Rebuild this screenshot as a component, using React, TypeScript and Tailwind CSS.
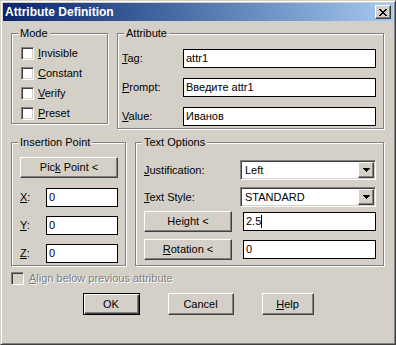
import type { ReactNode } from "react";

const raised =
  "border border-t-white border-l-white border-r-[#404040] border-b-[#404040] shadow-[inset_-1px_-1px_0_#808080]";
const sunken =
  "border border-t-[#808080] border-l-[#808080] border-r-white border-b-white shadow-[inset_1px_1px_0_#404040,inset_-1px_-1px_0_#d4d0c8]";

function Group({ label, className, children }: { label: string; className: string; children: ReactNode }) {
  return (
    <div className={`relative shrink-0 border border-[#808080] shadow-[inset_1px_1px_0_#fff,1px_1px_0_#fff] ${className}`}>
      <span className="absolute -top-[7px] left-[6px] bg-[#d4d0c8] px-[2px] leading-[13px] whitespace-nowrap">{label}</span>
      {children}
    </div>
  );
}

function Btn({ className = "", children }: { className?: string; children: ReactNode }) {
  return (
    <div className={`flex items-center justify-center shrink-0 ${raised} ${className}`}>
      <span className="whitespace-pre">{children}</span>
    </div>
  );
}

function Field({ className = "", children }: { className?: string; children?: ReactNode }) {
  return (
    <div className={`flex items-center shrink-0 bg-white border border-black pl-[2px] ${className}`}>{children}</div>
  );
}

function Check({ label }: { label: ReactNode }) {
  return (
    <div className="flex items-center gap-[4px] h-[13px]">
      <div className={`w-[13px] h-[13px] bg-white ${sunken}`} />
      <span>{label}</span>
    </div>
  );
}

function Select({ value }: { value: string }) {
  return (
    <div className={`flex items-stretch w-[136px] h-[20px] bg-white p-px ${sunken}`}>
      <span className="flex-1 flex items-center pl-[3px]">{value}</span>
      <div className={`w-[16px] bg-[#d4d0c8] flex items-center justify-center ${raised}`}>
        <svg width="7" height="4" viewBox="0 0 7 4" shapeRendering="crispEdges">
          <path d="M0 0h7v1H0zM1 1h5v1H1zM2 2h3v1H2zM3 3h1v1H3z" fill="#000" />
        </svg>
      </div>
    </div>
  );
}

export default function App() {
  return (
    <div className="w-[396px] h-[345px] bg-[#d4d0c8] border border-t-[#d4d0c8] border-l-[#d4d0c8] border-r-[#404040] border-b-[#404040] shadow-[inset_1px_1px_0_#fff,inset_-1px_-1px_0_#808080] p-[2px] flex flex-col text-[11px] leading-[13px] text-black font-['Liberation_Sans',sans-serif]">
      {/* Title bar */}
      <div className="h-[18px] flex items-center justify-between bg-gradient-to-r from-[#0a246a] to-[#a6caf0] pl-[2px] pr-[2px]">
        <span className="text-white font-bold text-[12px]">Attribute Definition</span>
        <div className={`w-[16px] h-[14px] bg-[#d4d0c8] flex items-center justify-center ${raised}`}>
          <svg width="8" height="7" viewBox="0 0 8 7" shapeRendering="crispEdges">
            <path
              d="M0 0h2v1H0zM6 0h2v1H6zM1 1h2v1H1zM5 1h2v1H5zM2 2h4v1H2zM3 3h2v1H3zM2 4h4v1H2zM1 5h2v1H1zM5 5h2v1H5zM0 6h2v1H0zM6 6h2v1H6z"
              fill="#000"
            />
          </svg>
        </div>
      </div>

      <div className="flex flex-col px-[8px]">
        {/* Mode + Attribute */}
        <div className="mt-[12px] flex items-start gap-[9px]">
          <Group label="Mode" className="w-[97px] h-[91px] pl-[9px] pt-[13px] flex flex-col gap-[7px]">
            <Check label={<><u>I</u>nvisible</>} />
            <Check label={<><u>C</u>onstant</>} />
            <Check label={<><u>V</u>erify</>} />
            <Check label={<><u>P</u>reset</>} />
          </Group>
          <Group label="Attribute" className="w-[267px] h-[96px] pl-[4px] pt-[15px] flex flex-col gap-[10px]">
            <div className="flex items-center">
              <span className="w-[61px]"><u>T</u>ag:</span>
              <Field className="w-[193px] h-[19px]">attr1</Field>
            </div>
            <div className="flex items-center">
              <span className="w-[61px]"><u>P</u>rompt:</span>
              <Field className="w-[193px] h-[19px]">Введите attr1</Field>
            </div>
            <div className="flex items-center">
              <span className="w-[61px]"><u>V</u>alue:</span>
              <Field className="w-[193px] h-[19px]">Иванов</Field>
            </div>
          </Group>
        </div>

        {/* Insertion Point + Text Options */}
        <div className="mt-[13px] flex items-start gap-[9px]">
          <Group label="Insertion Point" className="w-[115px] h-[124px] pl-[8px] pt-[14px]">
            <Btn className="w-[98px] h-[21px]">
              Pic<u>k</u> Point &lt;
            </Btn>
            <div className="mt-[10px] flex flex-col gap-[9px]">
              {["X", "Y", "Z"].map((a) => (
                <div key={a} className="flex items-center">
                  <span className="w-[26px]"><u>{a}</u>:</span>
                  <Field className="w-[72px] h-[19px]">0</Field>
                </div>
              ))}
            </div>
          </Group>
          <Group label="Text Options" className="w-[249px] h-[124px] pl-[8px] pt-[17px] flex flex-col">
            <div className="flex items-center">
              <span className="w-[96px]"><u>J</u>ustification:</span>
              <Select value="Left" />
            </div>
            <div className="mt-[7px] flex items-center">
              <span className="w-[96px]"><u>T</u>ext Style:</span>
              <Select value="STANDARD" />
            </div>
            <div className="mt-[4px] flex items-center">
              <Btn className="w-[88px] h-[21px]">
                Hei<u>g</u>ht &lt;
              </Btn>
              <Field className="ml-[11px] w-[133px] h-[19px]">
                2.5<span className="w-px h-[13px] bg-black" />
              </Field>
            </div>
            <div className="mt-[7px] flex items-center">
              <Btn className="w-[88px] h-[21px]">
                <u>R</u>otation &lt;
              </Btn>
              <Field className="ml-[11px] w-[133px] h-[19px]">0</Field>
            </div>
          </Group>
        </div>

        {/* Disabled checkbox */}
        <div className="mt-[6px] flex items-center gap-[5px] h-[13px]">
          <div className={`w-[13px] h-[13px] bg-[#d4d0c8] ${sunken}`} />
          <span className="text-[#808080] [text-shadow:1px_1px_0_#fff]">
            <u>A</u>lign below previous attribute
          </span>
        </div>

        {/* Buttons */}
        <div className="mt-[8px] flex justify-center gap-[28px]">
          <div className="w-[57px] h-[22px] flex items-center justify-center border border-black shadow-[inset_1px_1px_0_#fff,inset_-1px_-1px_0_#404040,inset_-2px_-2px_0_#808080]">
            OK
          </div>
          <Btn className="w-[66px] h-[22px]">Cancel</Btn>
          <Btn className="w-[52px] h-[22px]">
            <u>H</u>elp
          </Btn>
        </div>
      </div>
    </div>
  );
}
